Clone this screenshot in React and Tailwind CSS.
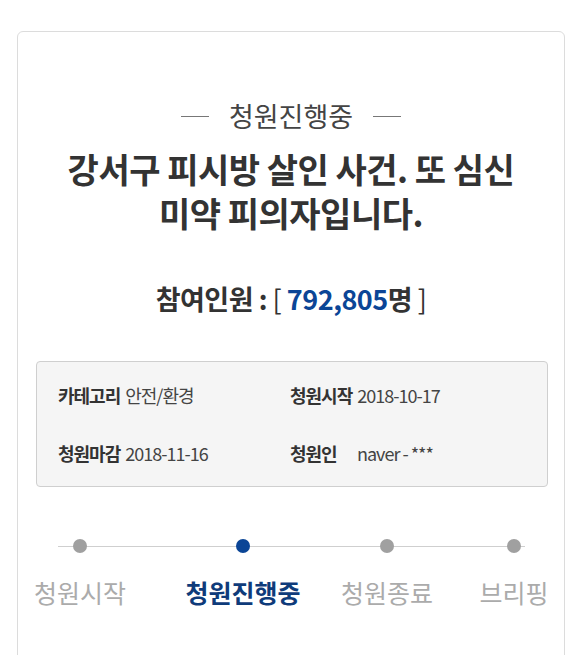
export default function App() {
  const steps = [
    { label: "청원시작", ml: "ml-[17px]", w: "w-[90px]", active: false },
    { label: "청원진행중", ml: "ml-[63px]", w: "w-[110px]", active: true },
    { label: "청원종료", ml: "ml-[44px]", w: "w-[90px]", active: false },
    { label: "브리핑", ml: "ml-[49px]", w: "w-[66px]", active: false },
  ];
  return (
    <div
      className="bg-white min-h-[655px] pl-[17px] pr-[15px] pt-[31px] overflow-hidden"
      style={{ fontFamily: '"Noto Sans CJK KR", "Noto Sans", sans-serif' }}
    >
      <div className="border border-[#dcdcdc] rounded-[6px] min-h-[700px] pt-[67px]">
        <div className="flex items-center justify-center gap-[20px] text-[27px] leading-[34px] text-[#444]">
          <span className="block w-[28px] h-[1px] bg-[#777]" />
          <span>청원진행중</span>
          <span className="block w-[28px] h-[1px] bg-[#777]" />
        </div>
        <h1 className="mt-[14px] text-center text-[34px] leading-[44px] font-bold text-[#333] tracking-[-0.5px]">
          강서구 피시방 살인 사건. 또 심신
          <br />
          미약 피의자입니다.
        </h1>
        <div className="mt-[46px] text-center text-[27px] leading-[36px] font-bold text-[#333] tracking-[-0.5px]">
          참여인원 : <span className="font-normal">[</span>{" "}
          <span className="text-[#0b4596]">792,805</span>명{" "}
          <span className="font-normal">]</span>
        </div>
        <div className="mt-[44px] ml-[18px] mr-[16px] bg-[#f5f5f5] border border-[#cfcfcf] rounded-[4px] pl-[21px] pt-[21px] pb-[21px] text-[18px] leading-[24px] tracking-[-1px] text-[#444]">
          <div className="flex">
            <div className="w-[232px] flex">
              <span className="font-bold text-[#333] mr-[5px]">카테고리</span>
              <span>안전/환경</span>
            </div>
            <div className="flex">
              <span className="font-bold text-[#333] mr-[5px]">청원시작</span>
              <span>2018-10-17</span>
            </div>
          </div>
          <div className="flex mt-[34px]">
            <div className="w-[232px] flex">
              <span className="font-bold text-[#333] mr-[5px]">청원마감</span>
              <span>2018-11-16</span>
            </div>
            <div className="flex">
              <span className="font-bold text-[#333] w-[67px]">청원인</span>
              <span>naver - ***</span>
            </div>
          </div>
        </div>
        <div className="relative mt-[52px]">
          <div className="absolute left-[40px] top-[7px] w-[467px] h-[1px] bg-[#cfcfcf]" />
          <div className="relative flex">
            {steps.map((s) => (
              <div key={s.label} className={`${s.ml} ${s.w} flex flex-col items-center`}>
                <span
                  className={`block w-[14px] h-[14px] rounded-full ${
                    s.active ? "bg-[#0b4596]" : "bg-[#a0a0a0]"
                  }`}
                />
                <span
                  className={`mt-[23px] whitespace-nowrap text-[25px] leading-[32px] ${
                    s.active ? "font-bold text-[#0f3b7a]" : "text-[#ababab]"
                  }`}
                >
                  {s.label}
                </span>
              </div>
            ))}
          </div>
        </div>
      </div>
    </div>
  );
}
